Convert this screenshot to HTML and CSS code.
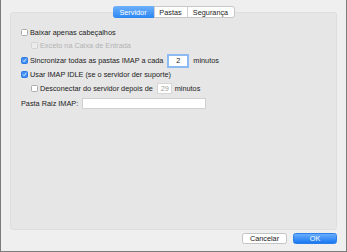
FILE: index.html
```html
<!DOCTYPE html>
<html>
<head>
<meta charset="utf-8">
<link rel="stylesheet" href="styles.css">
</head>
<body>
<div class="window">
  <div class="tabs">
    <div class="tab active">Servidor</div>
    <div class="tab">Pastas</div>
    <div class="tab">Segurança</div>
  </div>
  <div class="panel">
    <div class="row r1"><span class="cb"></span><span>Baixar apenas cabeçalhos</span></div>
    <div class="row r2 indent disabled"><span class="cb"></span><span>Exceto na Caixa de Entrada</span></div>
    <div class="row r3"><span class="cb on"><svg viewBox="0 0 8 8"><path d="M1.6 4.2 L3.3 5.9 L6.4 1.8" fill="none" stroke="#fff" stroke-width="1.3" stroke-linecap="round" stroke-linejoin="round"/></svg></span><span>Sincronizar todas as pastas IMAP a cada</span><span class="num focus">2</span><span>minutos</span></div>
    <div class="row r4"><span class="cb on"><svg viewBox="0 0 8 8"><path d="M1.6 4.2 L3.3 5.9 L6.4 1.8" fill="none" stroke="#fff" stroke-width="1.3" stroke-linecap="round" stroke-linejoin="round"/></svg></span><span>Usar IMAP IDLE (se o servidor der suporte)</span></div>
    <div class="row r5 indent"><span class="cb"></span><span>Desconectar do servidor depois de</span><span class="num small">29</span><span>minutos</span></div>
    <div class="row r6"><span class="label">Pasta Raiz IMAP:</span><span class="text"></span></div>
  </div>
  <div class="buttons">
    <div class="btn">Cancelar</div>
    <div class="btn primary">OK</div>
  </div>
</div>
</body>
</html>
```
FILE: styles.css
```css
html, body { margin: 0; padding: 0; }
body {
  font-family: "Liberation Sans", Arial, sans-serif;
  font-size: 7.3px;
  color: #222;
}
.window {
  width: 345px;
  height: 251px;
  background: #efefef;
  border: 1px solid #7c7c7c;
  border-top: none;
  display: flex;
  flex-direction: column;
  align-items: stretch;
}
.tabs {
  align-self: center;
  display: flex;
  margin-top: 6px;
  margin-bottom: -6px;
  height: 12px;
  position: relative;
  z-index: 1;
  background: #fff;
  border: 1px solid #c8c8c8;
  border-radius: 3px;
  box-sizing: border-box;
  margin-left: 0;
}
.tab {
  display: flex;
  align-items: center;
  justify-content: center;
  padding: 0 6px;
  color: #222;
  border-left: 1px solid #d0d0d0;
}
.tab:first-child { border-left: none; width: 29px; border-radius: 2px 0 0 2px; }
.tab:nth-child(2) { width: 20px; }
.tab:nth-child(3) { width: 34px; }
.tab.active {
  background: linear-gradient(#6fb1fb, #2b86f4);
  color: #fff;
  margin: -1px 0 -1px -1px;
  border-radius: 3px 0 0 3px;
}
.panel {
  margin: 0 9px 0 9px;
  height: 218px;
  box-sizing: border-box;
  background: #e6e6e6;
  border: 1px solid #dedede;
  border-radius: 3px;
  padding: 13px 0 0 10px;
  display: flex;
  flex-direction: column;
}
.row {
  display: flex;
  align-items: center;
  height: 13px;
}
.r3 { height: 15px; margin-top: 1px; }
.r4 { height: 12px; }
.r5 { height: 15px; margin-top: 1px; }
.r6 { height: 15px; }
.indent { padding-left: 10px; }
.cb {
  width: 7px;
  height: 7px;
  box-sizing: border-box;
  border: 1px solid #ababab;
  border-radius: 1.5px;
  background: #fff;
  margin-right: 2px;
  display: flex;
}
.cb svg { width: 100%; height: 100%; }
.cb.on {
  background: #3f8ef5;
  border-color: #2f7ae0;
}
.disabled { color: #b3b3b3; }
.disabled .cb { border-color: #d2d2d2; background: #ececec; }
.num {
  box-sizing: border-box;
  background: #fff;
  text-align: center;
  margin: 0 4px;
}
.num.focus {
  width: 22px;
  height: 14px;
  border: 2px solid #8cbaf2;
  line-height: 10px;
  color: #111;
}
.num.small {
  width: 15px;
  height: 11px;
  border: 1px solid #d6d6d6;
  color: #a0a0a0;
  text-align: right;
  padding-right: 2px;
  line-height: 9px;
  margin: 0 3px 0 4px;
}
.label { margin-right: 4px; }
.text {
  width: 124px;
  height: 11px;
  box-sizing: border-box;
  background: #fff;
  border: 1px solid #d0d0d0;
}
.buttons {
  display: flex;
  justify-content: flex-end;
  gap: 6px;
  margin: 3px 9px 0 0;
}
.btn {
  width: 45px;
  height: 11px;
  box-sizing: border-box;
  border: 1px solid #c4c4c4;
  border-radius: 2.5px;
  background: #fff;
  display: flex;
  align-items: center;
  justify-content: center;
  color: #222;
}
.btn.primary {
  width: 44px;
  background: linear-gradient(#68adfb, #1978f2);
  border-color: #2a7fe8;
  color: #fff;
}
```
